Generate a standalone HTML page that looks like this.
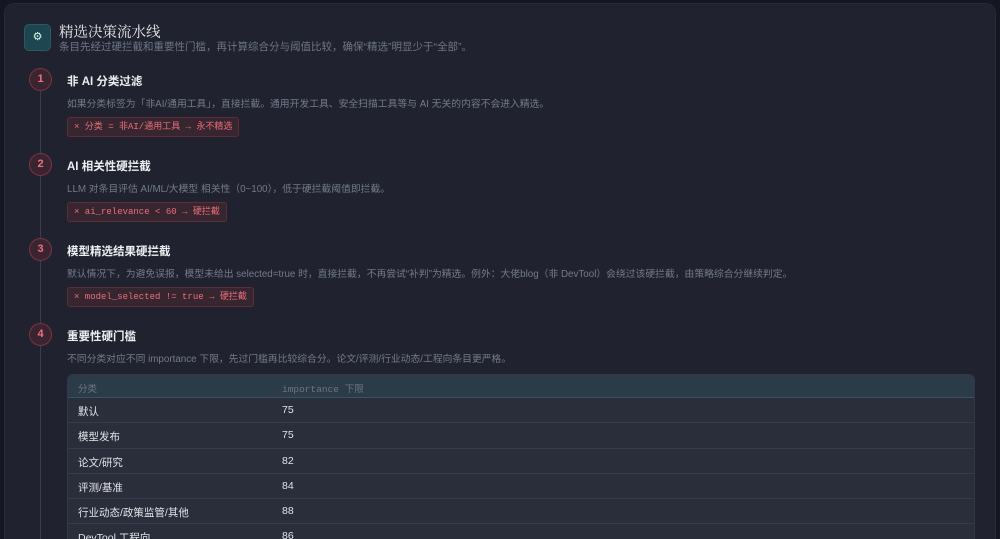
<!DOCTYPE html>
<html><head><meta charset="utf-8"><style>
*{margin:0;padding:0;box-sizing:border-box}
html{width:1000px;height:539px;overflow:hidden}
body{width:1000px;height:539px;overflow:hidden;background:#141722;font-family:"Liberation Sans","Noto Sans CJK SC",sans-serif;position:relative}
.card{position:absolute;left:4px;top:3px;width:992px;height:536px;background:#20232f;border-radius:10px 10px 0 0;border:1px solid #262a36;border-bottom:none}
.a{position:absolute;white-space:nowrap}
.ico{left:24px;top:24px;width:27px;height:27px;border-radius:5px;background:#1e4650;border:1px solid #2a5a63;color:#cfe;font-size:11px;text-align:center;line-height:25px}
.h{left:59px;top:21px;font-size:14.5px;color:#e8eaee;font-family:"Noto Serif CJK SC",serif}
.sub{left:59px;top:39px;font-size:10.5px;color:#6e7585}
.line{left:40px;top:80px;width:1px;height:459px;background:#3a3e4a}
.c{width:23px;height:23px;border-radius:50%;background:#3a2430;border:1.5px solid #7b3440;color:#f07080;font-size:11px;font-weight:bold;text-align:center;line-height:20px;left:29px}
.t{left:67px;font-size:11.5px;font-weight:bold;color:#eceef2}
.d{left:67px;font-size:9.8px;color:#737a8a}
.tag{left:67px;height:20px;padding:0 6px;background:#372630;border:1px solid #5c2e38;border-radius:3px;color:#ec6e7c;font-family:"Liberation Mono","Noto Sans CJK SC",monospace;font-size:9px;line-height:18px}
.tbl{left:67px;top:374px;width:908px;height:165px;border-radius:6px 6px 0 0;overflow:hidden;background:#2a2d3a;border:1px solid #343846;border-bottom:none}
.th{height:23px;background:#2b3b48;border-bottom:1px solid #3a5360;position:relative}
.tr{height:25.3px;border-bottom:1px solid #383c4a;position:relative;color:#e2e4ea;font-size:10.5px}
.c1{position:absolute;left:10px;top:6px}
.c2{position:absolute;left:214px;top:6px}
.th span{color:#6c7584;font-size:9.5px;top:6px}
</style></head><body>
<div class="card"></div>
<div class="a ico">⚙</div>
<div class="a h">精选决策流水线</div>
<div class="a sub">条目先经过硬拦截和重要性门槛，再计算综合分与阈值比较，确保“精选”明显少于“全部”。</div>
<div class="a line"></div>

<div class="a c" style="top:68px">1</div>
<div class="a t" style="top:73px">非 AI 分类过滤</div>
<div class="a d" style="top:96px">如果分类标签为「非AI/通用工具」，直接拦截。通用开发工具、安全扫描工具等与 AI 无关的内容不会进入精选。</div>
<div class="a tag" style="top:117px">× 分类 = 非AI/通用工具 → 永不精选</div>

<div class="a c" style="top:153px">2</div>
<div class="a t" style="top:158px">AI 相关性硬拦截</div>
<div class="a d" style="top:181px">LLM 对条目评估 AI/ML/大模型 相关性（0~100），低于硬拦截阈值即拦截。</div>
<div class="a tag" style="top:202px">× ai_relevance &lt; 60 → 硬拦截</div>

<div class="a c" style="top:238px">3</div>
<div class="a t" style="top:243px">模型精选结果硬拦截</div>
<div class="a d" style="top:266px">默认情况下，为避免误报，模型未给出 selected=true 时，直接拦截，不再尝试“补判”为精选。例外：大佬blog（非 DevTool）会绕过该硬拦截，由策略综合分继续判定。</div>
<div class="a tag" style="top:287px">× model_selected != true → 硬拦截</div>

<div class="a c" style="top:323px">4</div>
<div class="a t" style="top:328px">重要性硬门槛</div>
<div class="a d" style="top:351px">不同分类对应不同 importance 下限，先过门槛再比较综合分。论文/评测/行业动态/工程向条目更严格。</div>

<div class="a tbl">
<div class="th"><span class="c1" style="position:absolute">分类</span><span class="c2" style="position:absolute;font-family:'Liberation Mono','Noto Sans CJK SC',monospace">importance 下限</span></div>
<div class="tr"><span class="c1">默认</span><span class="c2">75</span></div>
<div class="tr"><span class="c1">模型发布</span><span class="c2">75</span></div>
<div class="tr"><span class="c1">论文/研究</span><span class="c2">82</span></div>
<div class="tr"><span class="c1">评测/基准</span><span class="c2">84</span></div>
<div class="tr"><span class="c1">行业动态/政策监管/其他</span><span class="c2">88</span></div>
<div class="tr"><span class="c1">DevTool 工程向</span><span class="c2">86</span></div>
</div>
</body></html>
